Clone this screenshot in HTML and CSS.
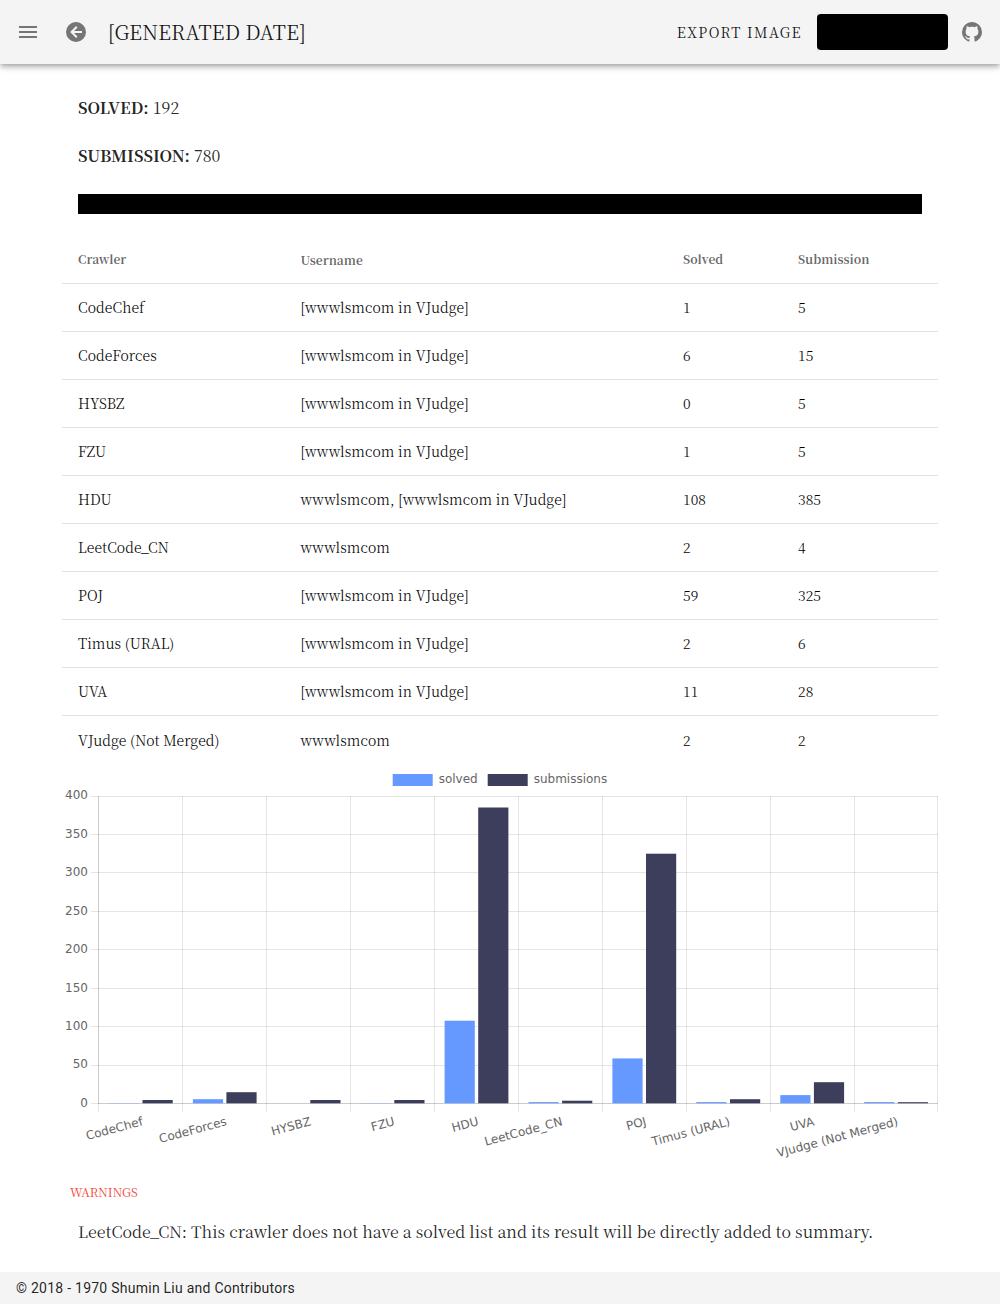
FILE: index.html
```html
<!DOCTYPE html>
<html lang="en">
<head>
<meta charset="utf-8">
<title>Crawler statistics</title>
<link rel="stylesheet" href="styles.css">
</head>
<body>
<header class="bar">
  <svg class="icon menu" viewBox="0 0 24 24"><path d="M3 18h18v-2H3v2zm0-5h18v-2H3v2zm0-7v2h18V6H3z"/></svg>
  <svg class="icon back" viewBox="0 0 24 24"><path d="M12 2a10 10 0 1 0 0 20 10 10 0 0 0 0-20zm6 11h-8l3.500 3.500-1.420 1.420L6.160 12l5.920-5.920L13.500 7.500 10 11h8v2z"/></svg>
  <h1 class="title">[GENERATED DATE]</h1>
  <span class="export">EXPORT IMAGE</span>
  <div class="account"><div class="redacted-button"></div></div>
  <svg class="icon github" viewBox="0 0 24 24"><path d="M12 2A10 10 0 0 0 2 12c0 4.420 2.870 8.170 6.840 9.500.5.080.660-.230.660-.500v-1.690c-2.770.600-3.360-1.340-3.360-1.340-.460-1.160-1.110-1.470-1.110-1.470-.910-.620.070-.600.070-.600 1 .070 1.530 1.030 1.530 1.030.870 1.520 2.340 1.070 2.910.830.090-.650.350-1.090.630-1.340-2.220-.250-4.550-1.110-4.550-4.920 0-1.110.380-2 1.030-2.710-.100-.250-.450-1.290.100-2.640 0 0 .840-.270 2.750 1.020.790-.220 1.650-.330 2.500-.330s1.710.110 2.500.330c1.910-1.290 2.750-1.020 2.750-1.020.550 1.350.200 2.390.100 2.640.650.710 1.030 1.600 1.030 2.710 0 3.820-2.340 4.660-4.570 4.910.360.310.690.920.690 1.850V21c0 .270.160.590.670.500C19.140 20.160 22 16.420 22 12A10 10 0 0 0 12 2z"/></svg>
</header>
<main class="content">
  <p class="stat"><strong>SOLVED:</strong> 192</p>
  <p class="stat"><strong>SUBMISSION:</strong> 780</p>
  <div class="redacted-line"></div>
  <table class="results">
    <colgroup><col class="c1"><col class="c2"><col class="c3"><col class="c4"></colgroup>
    <thead><tr><th>Crawler</th><th class="user">Username</th><th>Solved</th><th>Submission</th></tr></thead>
    <tbody>
      <tr><td>CodeChef</td><td>[wwwlsmcom in VJudge]</td><td>1</td><td>5</td></tr>
      <tr><td>CodeForces</td><td>[wwwlsmcom in VJudge]</td><td>6</td><td>15</td></tr>
      <tr><td>HYSBZ</td><td>[wwwlsmcom in VJudge]</td><td>0</td><td>5</td></tr>
      <tr><td>FZU</td><td>[wwwlsmcom in VJudge]</td><td>1</td><td>5</td></tr>
      <tr><td>HDU</td><td>wwwlsmcom, [wwwlsmcom in VJudge]</td><td>108</td><td>385</td></tr>
      <tr><td>LeetCode_CN</td><td>wwwlsmcom</td><td>2</td><td>4</td></tr>
      <tr><td>POJ</td><td>[wwwlsmcom in VJudge]</td><td>59</td><td>325</td></tr>
      <tr><td>Timus (URAL)</td><td>[wwwlsmcom in VJudge]</td><td>2</td><td>6</td></tr>
      <tr><td>UVA</td><td>[wwwlsmcom in VJudge]</td><td>11</td><td>28</td></tr>
      <tr><td>VJudge (Not Merged)</td><td>wwwlsmcom</td><td>2</td><td>2</td></tr>
    </tbody>
  </table>
  <svg class="chart" viewBox="62 764 876 408">
    <rect class="solved" x="392.700" y="774" width="40" height="12"/><text x="438.700" y="783">solved</text>
    <rect class="subs" x="487.700" y="774" width="40" height="12"/><text x="533.700" y="783">submissions</text>
    <path class="grid" d="M91 796.500H938M91 834.500H938M91 872.500H938M91 911.500H938M91 949.500H938M91 988.500H938M91 1026.500H938M91 1065.500H938M182.500 796V1112M266.500 796V1112M350.500 796V1112M434.500 796V1112M518.500 796V1112M602.500 796V1112M686.500 796V1112M770.500 796V1112M854.500 796V1112M937.500 796V1112M98.500 1104V1112M91 1103.500H98"/>
    <path class="axis" d="M98.500 796V1104M98 1103.500H938"/>
    <g class="yaxis">
      <text x="88" y="799">400</text><text x="88" y="838">350</text><text x="88" y="876">300</text><text x="88" y="915">250</text><text x="88" y="953">200</text><text x="88" y="992">150</text><text x="88" y="1030">100</text><text x="88" y="1068">50</text><text x="88" y="1107">0</text>
    </g>
    <g class="solved">
      <rect x="108.900" y="1103" width="30.200" height=".2"/>
      <rect x="192.900" y="1099.200" width="30.200" height="4.100"/>
      <rect x="360.600" y="1103" width="30.200" height=".2"/>
      <rect x="444.600" y="1020.700" width="30.200" height="82.600"/>
      <rect x="528.500" y="1102.100" width="30.200" height="1.200"/>
      <rect x="612.400" y="1058.400" width="30.200" height="44.900"/>
      <rect x="696.300" y="1102.100" width="30.200" height="1.200"/>
      <rect x="780.300" y="1095.100" width="30.200" height="8.200"/>
      <rect x="864.200" y="1102.100" width="30.200" height="1.200"/>
    </g>
    <g class="subs">
      <rect x="142.500" y="1100" width="30.200" height="3.300"/>
      <rect x="226.400" y="1092.200" width="30.200" height="11.100"/>
      <rect x="310.300" y="1100" width="30.200" height="3.300"/>
      <rect x="394.300" y="1100" width="30.200" height="3.300"/>
      <rect x="478.200" y="807.500" width="30.200" height="295.800"/>
      <rect x="562.100" y="1100.700" width="30.200" height="2.600"/>
      <rect x="646" y="853.700" width="30.200" height="249.600"/>
      <rect x="730" y="1099.200" width="30.200" height="4.100"/>
      <rect x="813.900" y="1082.200" width="30.200" height="21.100"/>
      <rect x="897.800" y="1102.200" width="30.200" height="1.100"/>
    </g>
    <g class="xaxis">
      <text transform="translate(143.500 1125) rotate(-15)">CodeChef</text>
      <text transform="translate(227.400 1125) rotate(-15)">CodeForces</text>
      <text transform="translate(311.600 1125) rotate(-15)">HYSBZ</text>
      <text transform="translate(395.300 1125) rotate(-15)">FZU</text>
      <text transform="translate(479.200 1125) rotate(-15)">HDU</text>
      <text transform="translate(563.100 1125) rotate(-15)">LeetCode_CN</text>
      <text transform="translate(647 1125) rotate(-15)">POJ</text>
      <text transform="translate(730.900 1125) rotate(-15)">Timus (URAL)</text>
      <text transform="translate(814.900 1125) rotate(-15)">UVA</text>
      <text transform="translate(898.800 1125) rotate(-15)">VJudge (Not Merged)</text>
    </g>
  </svg>
  <div class="warnings">WARNINGS</div>
  <p class="warning">LeetCode_CN: This crawler does not have a solved list and its result will be directly added to summary.</p>
</main>
<footer class="footer">© 2018 - 1970 Shumin Liu and Contributors</footer>
</body>
</html>
```
FILE: styles.css
```css
* { box-sizing: border-box; }
body { margin: 0; min-height: 1304px; display: flex; flex-direction: column; background: #fff; color: rgba(0,0,0,.87); font-family: "Noto Serif CJK SC", "Noto Serif SC", "Source Han Serif SC", "Noto Serif CJK JP", "Liberation Serif", serif; }
.bar { height: 64px; flex: none; display: flex; align-items: center; padding: 0 16px; background: #f4f4f4; box-shadow: 0 2px 4px -1px rgba(0,0,0,.2), 0 4px 5px rgba(0,0,0,.14), 0 1px 10px rgba(0,0,0,.12); }
.icon { width: 24px; height: 24px; flex: none; fill: #757575; }
.back { margin-left: 24px; }
.title { margin: 0 auto 0 20px; font-size: 20px; font-weight: 300; letter-spacing: .07px; color: #111; line-height: 32px; white-space: nowrap; }
.export { font-size: 14px; font-weight: 300; letter-spacing: 1.42px; color: #000; line-height: 36px; white-space: nowrap; }
.account { height: 40px; margin-left: 15px; padding: 2px 0; background: linear-gradient(#ddd, #ddd) left / 1px 100% no-repeat; }
.redacted-button { width: 131px; height: 36px; border-radius: 4px; background: #000; }
.github { margin-left: 12px; }
.content { flex: 1; padding: 20px 62px 0; }
.stat { margin: 0; padding: 0 16px; height: 48px; line-height: 48px; font-size: 16px; }
.stat strong { font-weight: 700; }
.redacted-line { height: 20px; margin: 14px 16px 0; background: #000; }
.results { width: 876px; margin-top: 21px; table-layout: fixed; border-collapse: separate; border-spacing: 0; }
.c1 { width: 222px; }
.c2 { width: 383px; }
.c3 { width: 115px; }
.c4 { width: 156px; }
th, td { height: 48px; padding: 0 16px; text-align: left; border-bottom: 1px solid #e0e0e0; white-space: nowrap; font-size: 14px; line-height: 20px; }
th:nth-child(2), td:nth-child(2) { padding-left: 16.5px; }
td { padding-bottom: 2px; font-weight: 300; letter-spacing: .07px; color: #000; }
th { height: 49px; font-size: 12px; font-weight: 700; color: rgba(0,0,0,.6); }
.user { padding-top: 2px; }
tr:last-child td { border-bottom: 0; padding-bottom: 0; }
.chart { display: block; width: 876px; height: 408px; font: 12px "DejaVu Sans", sans-serif; }
.chart text { fill: #666; }
.solved { fill: #69f; }
.subs { fill: #3d3d5c; }
.grid { stroke: rgba(0,0,0,.1); }
.axis { stroke: rgba(0,0,0,.2); }
.yaxis, .xaxis { text-anchor: end; }
.warnings { padding-left: 8px; margin-top: 4px; font-size: 12px; line-height: 32px; color: #f44336; }
.warning { margin: 0; padding-left: 16px; font-size: 16px; line-height: 48px; white-space: nowrap; }
.footer { height: 32px; flex: none; padding: 0 16px; background: #f4f4f4; font: 14px/32px Roboto, sans-serif; letter-spacing: .25px; }
```
